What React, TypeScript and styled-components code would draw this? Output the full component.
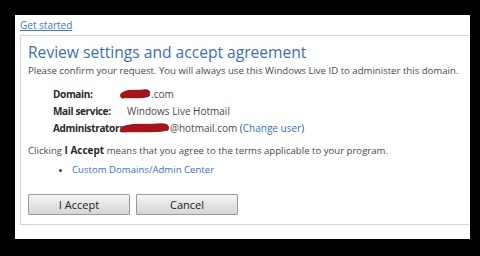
import React from "react";
import styled, { createGlobalStyle } from "styled-components";

const Global = createGlobalStyle`
  html, body {
    margin: 0;
    padding: 0;
    background: #000;
  }
  body {
    width: 480px;
    height: 256px;
    overflow: hidden;
    font-family: "Open Sans", "Noto Sans", sans-serif;
  }
`;

const Screen = styled.div`
  width: 480px;
  height: 256px;
  background: #000;
  padding: 15px 10px 17px 15px;
  box-sizing: border-box;
`;

const Panel = styled.div`
  background: #fff;
  height: 100%;
  display: flex;
  flex-direction: column;
  padding-left: 5px;
  padding-bottom: 14px;
  box-sizing: border-box;
`;

const TopBar = styled.div`
  height: 20px;
  display: flex;
  align-items: center;
  box-sizing: border-box;
`;

const TopLink = styled.a`
  font-size: 10px;
  color: #3f78c4;
  text-decoration: underline;
  line-height: 1;
`;

const Box = styled.div`
  flex: 1;
  border-top: 1px solid #cbd9e6;
  border-left: 1px solid #cbd9e6;
  border-bottom: 1px solid #cbd9e6;
  padding: 4px 0 0 7px;
  display: flex;
  flex-direction: column;
`;

const Title = styled.h1`
  margin: 0;
  font-weight: 400;
  font-size: 15.6px;
  line-height: 24px;
  color: #3c6eb4;
`;

const Text = styled.p`
  margin: 0;
  font-size: 9.6px;
  line-height: 14px;
  color: #4a4a4a;
`;

const Strong = styled.b`
  color: #2a2a2a;
  font-size: 10px;
`;

const Details = styled.div`
  display: grid;
  grid-template-columns: 67px auto;
  row-gap: 3px;
  margin: 9px 0 8px 25px;
  font-size: 10px;
  line-height: 14px;
`;

const Label = styled.span`
  font-weight: 700;
  color: #2a2a2a;
  letter-spacing: -0.35px;
  white-space: nowrap;
`;

const Value = styled.span<{ $indent?: number }>`
  color: #4a4a4a;
  display: inline-flex;
  align-items: center;
  white-space: nowrap;
  margin-left: ${(p) => p.$indent ?? 0}px;
`;

const Link = styled.a`
  color: #3a72bf;
  text-decoration: none;
`;

const BulletList = styled.ul`
  margin: 5px 0 0;
  padding-left: 44px;
  font-size: 9.6px;
  line-height: 14px;
  li::marker {
    color: #444;
  }
`;

const Buttons = styled.div`
  display: flex;
  gap: 6px;
  margin-top: 17px;
`;

const Button = styled.button`
  width: 102px;
  height: 21px;
  border: 1px solid #9a9a9a;
  border-radius: 1px;
  background: linear-gradient(#f6f6f6, #e4e4e4 50%, #d6d6d6);
  font-family: "Open Sans", "Noto Sans", sans-serif;
  font-size: 11px;
  color: #222;
  padding: 0;
`;

const Scribble = ({ width }: { width: number }) => (
  <svg width={width} height="12" viewBox={`0 0 ${width} 12`}>
    <path
      d={`M2 5 C ${width * 0.25} 1, ${width * 0.5} 3, ${width * 0.75} 2 S ${width - 1} 5, ${width - 2} 8 C ${width * 0.7} 11, ${width * 0.35} 9, 2 10 C 0 9, 0 6, 2 5 Z`}
      fill="#a8141a"
      stroke="#8e1016"
      strokeWidth="1"
      strokeLinejoin="round"
    />
  </svg>
);

export default function App() {
  return (
    <>
      <Global />
      <Screen>
        <Panel>
          <TopBar>
            <TopLink href="#">Get started</TopLink>
          </TopBar>
          <Box>
            <Title>Review settings and accept agreement</Title>
            <Text>
              Please confirm your request. You will always use this Windows Live ID to administer this domain.
            </Text>
            <Details>
              <Label>Domain:</Label>
              <Value>
                <Scribble width={31} />
                .com
              </Value>
              <Label>Mail service:</Label>
              <Value $indent={7}>Windows Live Hotmail</Value>
              <Label>Administrator:</Label>
              <Value>
                <Scribble width={50} />
                @hotmail.com&nbsp;(<Link href="#">Change user</Link>)
              </Value>
            </Details>
            <Text>
              Clicking <Strong>I Accept</Strong> means that you agree to the terms applicable to your program.
            </Text>
            <BulletList>
              <li>
                <Link href="#">Custom Domains/Admin Center</Link>
              </li>
            </BulletList>
            <Buttons>
              <Button>I Accept</Button>
              <Button>Cancel</Button>
            </Buttons>
          </Box>
        </Panel>
      </Screen>
    </>
  );
}
